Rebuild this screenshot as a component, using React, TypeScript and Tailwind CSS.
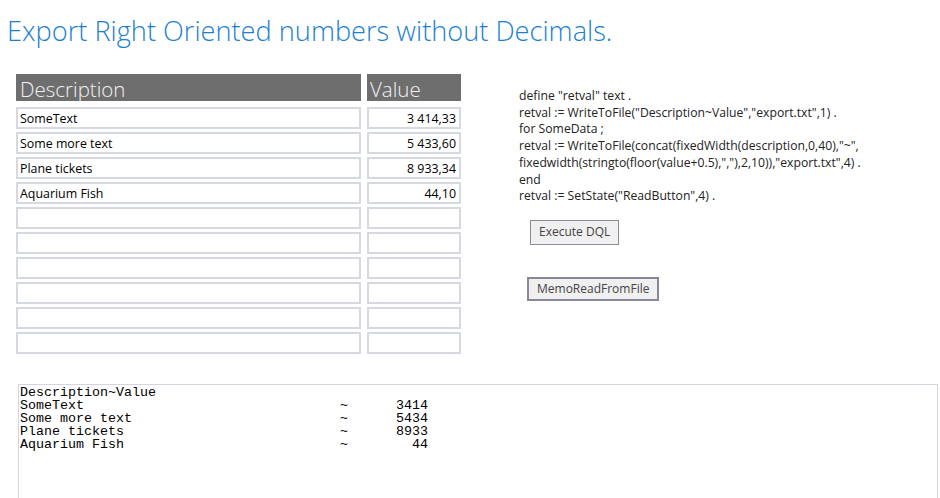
import React from "react";

const rows = [
  { description: "SomeText", value: "3 414,33" },
  { description: "Some more text", value: "5 433,60" },
  { description: "Plane tickets", value: "8 933,34" },
  { description: "Aquarium Fish", value: "44,10" },
];

const emptyRows = 6;

const code = [
  'define "retval" text .',
  'retval := WriteToFile("Description~Value","export.txt",1) .',
  "for SomeData ;",
  'retval := WriteToFile(concat(fixedWidth(description,0,40),"~",',
  'fixedwidth(stringto(floor(value+0.5),","),2,10)),"export.txt",4) .',
  "end",
  'retval := SetState("ReadButton",4) .',
];

function exportLine(desc: string, value: string) {
  return desc.padEnd(40, " ") + "~" + value.padStart(10, " ");
}

const fileText = [
  "Description~Value",
  exportLine("SomeText", "3414"),
  exportLine("Some more text", "5434"),
  exportLine("Plane tickets", "8933"),
  exportLine("Aquarium Fish", "44"),
].join("\n");

export default function App() {
  return (
    <div className="w-[940px] h-[498px] overflow-hidden bg-white font-['Open_Sans',sans-serif]">
      <h1 className="pl-[7px] pt-[13px] text-[27.2px] leading-[36px] font-light text-[#1e7fd2]">
        Export Right Oriented numbers without Decimals.
      </h1>

      <div className="flex mt-[25px]">
        {/* grid with inputs */}
        <div className="ml-4 w-[445px]">
          <div className="grid grid-cols-[345px_94px] gap-x-[6px]">
            <div className="h-[27px] bg-[#6e6e6e] pl-[4px] pt-[2px] text-[20.5px] leading-[27px] font-light text-[#f2f2f2]">
              Description
            </div>
            <div className="h-[27px] bg-[#6e6e6e] pl-[3px] pt-[2px] text-[20.5px] leading-[27px] font-light text-[#f2f2f2]">
              Value
            </div>
          </div>
          <div className="mt-[6px] flex flex-col gap-[3px]">
            {rows.map((r) => (
              <div key={r.description} className="grid grid-cols-[345px_94px] gap-x-[6px]">
                <div className="h-[22px] border-2 border-[#d6d8e2] pl-[2px] text-[12.4px] leading-[19px] text-black">
                  {r.description}
                </div>
                <div className="h-[22px] border-2 border-[#d6d8e2] pr-[3px] text-right text-[12.4px] leading-[19px] text-black">
                  {r.value}
                </div>
              </div>
            ))}
            {Array.from({ length: emptyRows }).map((_, i) => (
              <div key={i} className="grid grid-cols-[345px_94px] gap-x-[6px]">
                <div className="h-[22px] border-2 border-[#d6d8e2]" />
                <div className="h-[22px] border-2 border-[#d6d8e2]" />
              </div>
            ))}
          </div>
        </div>

        {/* script + buttons */}
        <div className="ml-[58px] pt-[14px]">
          <div className="text-[12.2px] leading-[16.7px] text-[#222]">
            {code.map((line, i) => (
              <div key={i}>{line}</div>
            ))}
          </div>
          <button className="block ml-[11px] mt-[15px] h-[25px] px-[8px] bg-[#f0f0f0] border border-[#8f8c9a] text-[12px] text-[#444]">
            Execute DQL
          </button>
          <button className="block ml-[8px] mt-[32px] h-[24px] px-[8px] bg-[#f0f0f0] border-2 border-[#8a8598] text-[12px] text-[#444]">
            MemoReadFromFile
          </button>
        </div>
      </div>

      <div className="ml-[18px] mt-[30px] w-[920px] h-[200px] border border-[#d6d4e0] pl-[1px] pt-[1px]">
        <pre className="font-['Liberation_Mono',monospace] text-[13.33px] leading-[13px] text-black">
          {fileText}
        </pre>
      </div>
    </div>
  );
}
